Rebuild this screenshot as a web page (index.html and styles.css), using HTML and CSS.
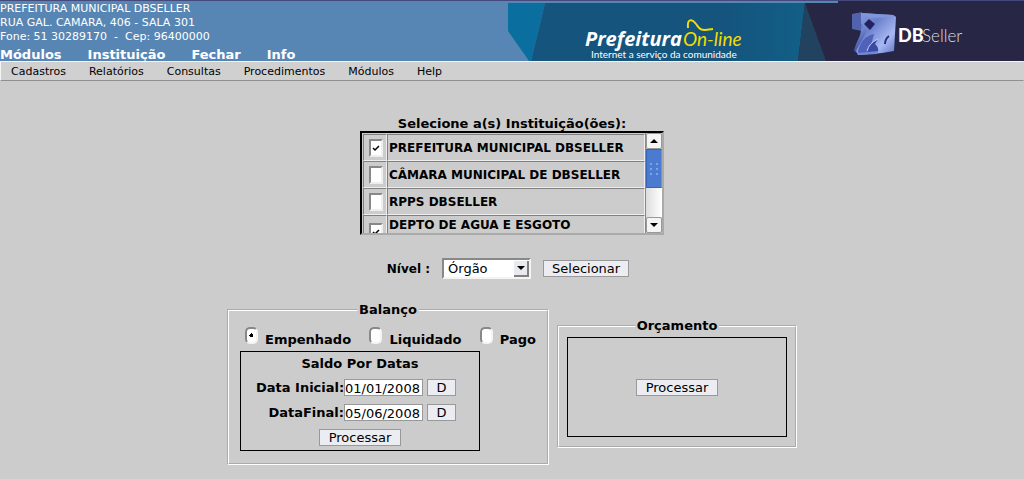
FILE: index.html
```html
<!DOCTYPE html>
<html lang="pt-BR">
<head>
<meta charset="utf-8">
<title>DBSeller</title>
<link rel="stylesheet" href="styles.css">
</head>
<body>
<header class="top">
  <div class="top-info">
    <address class="address">PREFEITURA MUNICIPAL DBSELLER<br>RUA GAL. CAMARA, 406 - SALA 301<br>Fone: 51 30289170 &nbsp;- &nbsp;Cep: 96400000</address>
    <nav class="main-nav">
      <a href="#">Módulos</a><a href="#">Instituição</a><a href="#">Fechar</a><a href="#">Info</a>
    </nav>
  </div>
  <svg class="banner" viewBox="0 0 516 60" role="img" aria-label="Prefeitura On-line, DBSeller">
    <defs>
      <linearGradient id="cube" x1="0" y1="0" x2="1" y2="1">
        <stop offset="0" stop-color="#8d9fe0"/><stop offset=".35" stop-color="#6a80cc"/><stop offset=".7" stop-color="#a9b8f2"/><stop offset="1" stop-color="#5c70c8"/>
      </linearGradient>
      <linearGradient id="side" x1="0" y1="0" x2=".4" y2="1">
        <stop offset="0" stop-color="#4f60aa"/><stop offset=".5" stop-color="#6f84cf"/><stop offset="1" stop-color="#2f3a90"/>
      </linearGradient>
      <linearGradient id="fade" x1="0" x2="1">
        <stop offset="0" stop-color="#14547d"/><stop offset=".7" stop-color="#14547d"/><stop offset="1" stop-color="#125f87"/>
      </linearGradient>
    </defs>
    <path fill="#282645" d="M290 0H516V60H290z"/>
    <path fill="#5886b4" d="M0 0H330V2H0z"/>
    <path fill="#0a6f9f" d="M0 2H37L23 60H21L0 30z"/>
    <path fill="url(#fade)" d="M37 2H297L290 60H23z"/>
    <path fill="#21435f" d="M297 2L318 60H290z"/>
    <text class="brand" x="77" y="45">Prefeitura</text>
    <text class="online" x="175" y="45">On-line</text>
    <path class="wave" d="M180 27C179 17 184 18 188 23S192 29 197 29L205 28"/>
    <text class="tagline" x="83" y="57">Internet a serviço da comunidade</text>
    <path fill="#5163ad" d="M344 13L354 11V30L344 28z"/>
    <path fill="url(#side)" d="M354 12L362 17L366 24L360 36L351 53L346 50C348 40 353 36 353 28z"/>
    <path fill="url(#cube)" d="M353 12L385 14L388 16L386 50L374 52L350 54L348 50C350 44 356 38 358 30L353 22z"/>
    <path fill="#8395da" d="M353 12L385 14L388 16L362 17z"/>
    <path fill="#22225f" d="M361 18L367 23L362 29L356 23z"/>
    <path fill="#4f61b8" d="M350 50C353 39 358 35 366 33L361 52L351 53z"/>
    <path fill="#3b4aa4" d="M360 51C361 44 364 41 370 38L367 43Q371 46 370 51z"/>
    <path fill="none" stroke="#c2ccfa" stroke-width="1" d="M359 50Q361 42 370 38"/>
    <path fill="none" stroke="#27307f" stroke-width="2" d="M377 43Q377 38 381 35"/>
    <path fill="#7286d6" d="M350 52L370 50L369 53L351 54z"/>
    <text class="db" x="390" y="41">DB</text>
    <text class="seller" x="414" y="41">Seller</text>
  </svg>
</header>
<nav class="menu">
  <a href="#">Cadastros</a><a href="#">Relatórios</a><a href="#">Consultas</a><a href="#">Procedimentos</a><a href="#">Módulos</a><a href="#">Help</a>
</nav>
<main class="content">
  <h1 class="label">Selecione a(s) Instituição(ões):</h1>
  <div class="listbox">
    <div class="rows">
      <label class="row"><span class="tick"><input type="checkbox" checked></span><span class="name">PREFEITURA MUNICIPAL DBSELLER</span></label>
      <label class="row"><span class="tick"><input type="checkbox"></span><span class="name">CÂMARA MUNICIPAL DE DBSELLER</span></label>
      <label class="row"><span class="tick"><input type="checkbox"></span><span class="name">RPPS DBSELLER</span></label>
      <label class="row row-last"><span class="tick"><input type="checkbox" checked></span><span class="name">DEPTO DE AGUA E ESGOTO</span></label>
    </div>
    <div class="scroll">
      <button class="arrow" aria-label="Subir"><svg viewBox="0 0 8 4"><path d="M0 4L4 0L8 4z"/></svg></button>
      <div class="track"><div class="thumb"><svg viewBox="0 0 8 12"><path d="M0 0h2v2H0zM6 0h2v2H6zM0 5h2v2H0zM6 5h2v2H6zM0 10h2v2H0zM6 10h2v2H6z"/></svg></div></div>
      <button class="arrow" aria-label="Descer"><svg viewBox="0 0 8 4"><path d="M0 0H8L4 4z"/></svg></button>
    </div>
  </div>
  <div class="level">
    <label for="nivel">Nível :</label>
    <select id="nivel"><option>Órgão</option></select>
    <button class="btn">Selecionar</button>
  </div>
  <div class="panels">
    <fieldset class="panel balance">
      <legend>Balanço</legend>
      <div class="radios">
        <label><input type="radio" name="tipo" checked>Empenhado</label>
        <label><input type="radio" name="tipo">Liquidado</label>
        <label><input type="radio" name="tipo">Pago</label>
      </div>
      <div class="box dates">
        <h2 class="label">Saldo Por Datas</h2>
        <div class="date"><label for="ini">Data Inicial:</label><input id="ini" type="text" value="01/01/2008"><button class="btn small">D</button></div>
        <div class="date"><label for="fim">DataFinal:</label><input id="fim" type="text" value="05/06/2008"><button class="btn small">D</button></div>
        <button class="btn">Processar</button>
      </div>
    </fieldset>
    <fieldset class="panel budget">
      <legend>Orçamento</legend>
      <div class="box center"><button class="btn">Processar</button></div>
    </fieldset>
  </div>
</main>
</body>
</html>
```
FILE: styles.css
```css
* { box-sizing: border-box; }
body {
  margin: 0;
  background: #ccc;
  color: #000;
  font: 13px/16px "DejaVu Sans", sans-serif;
}
a { color: inherit; text-decoration: none; }
button, input, select { font: inherit; color: inherit; margin: 0; border-radius: 0; appearance: none; }

.top {
  display: flex;
  justify-content: space-between;
  background: #5886b4;
  border-top: 1px solid #444a7c;
}
.top-info { color: #fff; white-space: nowrap; padding-top: 1px; }
.address { font: 11px/14px "DejaVu Sans", sans-serif; }
.main-nav { display: flex; gap: 26px; padding-top: 5px; font-weight: bold; line-height: 12px; }
.banner { display: block; width: 516px; height: 60px; }
.brand { font: italic bold 20px "Open Sans", sans-serif; fill: #fff; }
.online { font: italic 19px Lato, sans-serif; fill: #f4dc00; }
.tagline { font: 10px Lato, sans-serif; fill: #fff; }
.wave { fill: none; stroke: #f4dc00; stroke-width: 2; }
.db { font: 900 18px Lato, sans-serif; fill: #fff; }
.seller { font: 300 17px Lato, sans-serif; fill: #ddd; }

.menu {
  display: flex;
  gap: 23px;
  padding: 2px 10px 0;
  font-size: 11px;
  line-height: 16px;
  background: #d0d0d0;
  border: 1px solid;
  border-color: #f4f4f4 #d0d0d0 #909090 #f4f4f4;
}

.content { display: flex; flex-direction: column; align-items: center; padding-top: 35px; }
.label { margin: 0; font-size: 13px; font-weight: bold; line-height: 15px; }
.listbox {
  display: flex;
  width: 304px;
  height: 104px;
  border: 2px solid;
  border-color: #000 #aaa #aaa #000;
}
.rows { flex: 1; overflow: hidden; padding: 1px 0 0 1px; }
.row { display: flex; height: 27px; font-size: 12px; font-weight: bold; }
.tick, .name {
  display: flex;
  align-items: center;
  border: 1px solid;
  border-color: #808080 #eee #eee #808080;
}
.tick { width: 24px; padding: 0 0 0 5px; }
.name { flex: 1; padding-left: 1px; }
.row-last .name { align-items: flex-start; padding-top: 1px; }
.row-last .tick { align-items: flex-end; }
input[type="checkbox"] {
  width: 14px;
  height: 18px;
  background: #fff;
  border: 2px solid;
  border-color: #888 #eee #eee #888;
}
input[type="checkbox"]:checked {
  background: #fff url("data:image/svg+xml,%3Csvg xmlns='http://www.w3.org/2000/svg' viewBox='0 0 8 8'%3E%3Cpath d='M1 4L3 6L7 2' fill='none' stroke='black' stroke-width='1.500'/%3E%3C/svg%3E") center / 8px 8px no-repeat;
}
.scroll { display: flex; flex-direction: column; width: 17px; border-left: 1px solid #888; }
.arrow {
  display: flex;
  align-items: center;
  justify-content: center;
  height: 16px;
  padding: 0;
  background: #f4f4f4;
  border: 1px solid #999;
  border-radius: 2px;
}
.arrow svg { width: 8px; height: 4px; }
.track { flex: 1; background: linear-gradient(90deg, #ddd, #fff); }
.thumb {
  display: flex;
  align-items: center;
  justify-content: center;
  height: 39px;
  background: #4a7bd0;
  border: 1px solid;
  border-color: #3565b5 #5b95ff #3565b5 #3565b5;
}
.thumb svg { width: 8px; height: 12px; fill: #7ba4ea; }

.level { display: flex; align-items: center; gap: 12px; margin-top: 23px; padding-right: 8px; }
.level label { font-size: 12px; font-weight: bold; }
.level select {
  width: 89px;
  height: 21px;
  padding: 0 4px;
  border: 2px solid;
  border-color: #888 #f4f4f4 #f4f4f4 #888;
  background: #fff url("data:image/svg+xml,%3Csvg xmlns='http://www.w3.org/2000/svg' viewBox='0 0 15 16'%3E%3Cpath d='M0 0H15V16H0z' fill='%23808080'/%3E%3Cpath d='M0 0H13V14H0z' fill='%23e8eaef'/%3E%3Cpath d='M3 5H11L7 9z'/%3E%3C/svg%3E") right center / 15px 16px no-repeat;
}
.btn {
  height: 17px;
  padding: 0 9px;
  line-height: 15px;
  background: #ecedf2;
  border: 1px solid #999;
}
.level .btn { padding: 0 8px; }
.date .small { width: 29px; padding: 0; }

.panels { display: flex; align-items: center; gap: 8px; margin-top: 23px; }
.panel { margin: 0; min-width: 0; border: 2px groove #fff; }
.panel legend { padding: 0 2px; margin: 0 auto; font-weight: bold; }
.balance { width: 322px; padding: 9px 11px 12px; }
.budget { width: 240px; padding: 3px 8px 9px; margin-bottom: 1px; }
.radios { display: flex; justify-content: space-between; padding: 0 0 3px 5px; font-weight: bold; }
.radios label { display: flex; align-items: flex-end; gap: 7px; }
input[type="radio"] {
  width: 13px;
  height: 17px;
  margin-bottom: 4px;
  border: 2px solid;
  border-color: #888 #f4f4f4 #f4f4f4 #888;
  border-radius: 5px;
  background: #fff;
}
input[type="radio"]:checked { background: radial-gradient(circle, #000 2px, #fff 2px); }
.box { border: 1px solid #000; height: 100px; }
.dates { display: flex; flex-direction: column; align-items: center; width: 240px; padding-top: 4px; gap: 8px; }
.date { display: flex; align-items: center; padding-right: 8px; }
.date label { width: 88px; text-align: right; font-weight: bold; white-space: nowrap; }
.date input {
  width: 79px;
  height: 17px;
  margin-right: 4px;
  padding: 1px 0 0;
  border: 1px solid #999;
  background: #fff;
}
.center { display: flex; align-items: center; justify-content: center; }
```
